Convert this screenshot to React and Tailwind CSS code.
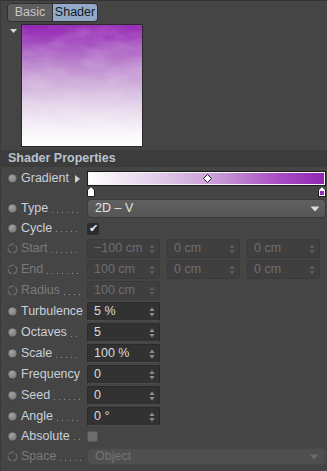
/* =========================================
   SMALL ICONS
========================================= */
const Dot = ({ disabled }) =>
  disabled ? (
    <svg width="11" height="11" viewBox="0 0 11 11" className="shrink-0">
      <circle cx="5.5" cy="5.5" r="4.3" fill="none" stroke="#6c6c6c" strokeWidth="1.3" strokeDasharray="6 1.6" />
    </svg>
  ) : (
    <svg width="11" height="11" viewBox="0 0 11 11" className="shrink-0">
      <defs>
        <radialGradient id="dotg" cx="40%" cy="35%" r="70%">
          <stop offset="0" stopColor="#a3a3a3" />
          <stop offset="1" stopColor="#747474" />
        </radialGradient>
      </defs>
      <circle cx="5.5" cy="5.5" r="4.6" fill="url(#dotg)" stroke="#3a3a3a" strokeWidth="0.8" />
    </svg>
  );

const Spinner = ({ disabled }) => (
  <svg width="6" height="10" viewBox="0 0 6 10" className="shrink-0">
    <path d="M3 0.5 L5.6 4 L0.4 4 Z M3 9.5 L5.6 6 L0.4 6 Z" fill={disabled ? "#5c5c5c" : "#8e8e8e"} />
  </svg>
);

const DownArrow = ({ color }) => (
  <svg width="10" height="6" viewBox="0 0 10 6">
    <path d="M0.5 0.5 L9.5 0.5 L5 5.5 Z" fill={color} />
  </svg>
);

/* =========================================
   LABEL COLUMN
========================================= */
const Label = ({ text, disabled, leader = true, extra = null }) => (
  <div className="w-[86px] shrink-0 flex items-center pl-[6px] pr-[6px] h-full">
    <Dot disabled={disabled} />
    <span
      className={`ml-[3px] text-[12.5px] leading-none whitespace-nowrap ${
        disabled ? "text-[#7a7a7a]" : "text-[#c9d0d9]"
      }`}
    >
      {text}
    </span>
    {leader ? (
      <span className="flex-1 self-end mb-[6px] ml-[4px] h-px bg-[repeating-linear-gradient(to_right,#909090_0_1px,transparent_1px_5px)]" />
    ) : (
      <span className="flex-1" />
    )}
    {extra}
  </div>
);

const Field = ({ value, disabled }) => (
  <div
    className={`w-[73px] h-[19px] flex items-center justify-between pl-[6px] pr-[4px] rounded-[2px] border ${
      disabled
        ? "bg-[#3f3f3f] border-[#3a3a3a] text-[#6e6e6e]"
        : "bg-[#323232] border-[#2a2a2a] border-b-[#4c4c4c] text-[#dcdcdc]"
    }`}
  >
    <span className="text-[12.5px] leading-none">{value}</span>
    <Spinner disabled={disabled} />
  </div>
);

const Row = ({ h = "h-[21px]", children }) => (
  <div className={`flex items-center ${h}`}>{children}</div>
);

/* =========================================
   MAIN PANEL
========================================= */
export default function App() {
  return (
    <div
      className="w-[327px] h-[471px] bg-[#454545] overflow-hidden border-t border-t-[#333] border-l border-l-[#3a3a3a]"
      style={{ fontFamily: '"Liberation Sans", Arial, sans-serif' }}
    >
      {/* ================= TABS ================= */}
      <div className="pt-[2px] pl-[6px] flex">
        <div className="flex h-[19px] rounded-[4px] border border-[#303030] overflow-hidden text-[12.5px]">
          <div className="w-[44px] flex items-center justify-center bg-[#5d5d5d] text-[#c6c6c6]">Basic</div>
          <div className="w-[45px] flex items-center justify-center bg-[#93a9c9] text-[#161a22] border-l border-[#303030]">Shader</div>
        </div>
      </div>

      {/* ================= PREVIEW ================= */}
      <div className="flex mt-[2px]">
        <div className="w-[20px] pl-[9px] pt-[5px]">
          <svg width="7" height="4" viewBox="0 0 7 4" className="block">
            <path d="M0 0 L7 0 L3.5 4 Z" fill="#d8d8d8" />
          </svg>
        </div>
        <div className="w-[122px] h-[123px] border border-[#2a2a2a] bg-white">
          <svg width="120" height="121" viewBox="0 0 120 121" className="block">
            <defs>
              <linearGradient id="pv" x1="0" y1="0" x2="0" y2="1">
                <stop offset="0" stopColor="#9526b5" />
                <stop offset="0.12" stopColor="#a044bd" />
                <stop offset="0.3" stopColor="#b980cb" />
                <stop offset="0.5" stopColor="#d1b1dc" />
                <stop offset="0.7" stopColor="#e8daed" />
                <stop offset="0.88" stopColor="#f8f4f9" />
                <stop offset="1" stopColor="#ffffff" />
              </linearGradient>
              <filter id="cloud" x="0" y="0" width="100%" height="100%">
                <feTurbulence type="fractalNoise" baseFrequency="0.03 0.07" numOctaves="3" seed="4" />
                <feColorMatrix type="matrix" values="0 0 0 0 1  0 0 0 0 1  0 0 0 0 1  0 0 0 0.35 -0.12" />
              </filter>
            </defs>
            <rect width="120" height="121" fill="url(#pv)" />
            <rect width="120" height="121" filter="url(#cloud)" />
          </svg>
        </div>
      </div>

      {/* ================= HEADER ================= */}
      <div className="mt-[3px] h-[17px] bg-[#3c3c3c] flex items-center pl-[7px]">
        <span className="text-[12.5px] font-bold text-[#b9c3cf]">Shader Properties</span>
      </div>

      {/* ================= GRADIENT ================= */}
      <div className="flex mt-[4px] h-[27px]">
        <div className="h-[15px] flex">
          <Label
            text="Gradient"
            leader={false}
            extra={
              <svg width="5" height="8" viewBox="0 0 5 8" className="mr-[1px]">
                <path d="M0 0 L5 4 L0 8 Z" fill="#cfcfcf" />
              </svg>
            }
          />
        </div>
        <div className="flex-1 pr-[1px] flex flex-col">
          <div className="relative h-[15px] border border-[#1c1c1c]">
            <div className="h-full border border-[#f4f4f4] bg-[linear-gradient(to_right,#ffffff_0%,#e6d3ec_25%,#c89ad6_55%,#a84fc3_80%,#9226b4_100%)]" />
            <svg width="9" height="9" viewBox="0 0 9 9" className="absolute left-[115px] top-[2px]">
              <path d="M4.5 0.5 L8.5 4.5 L4.5 8.5 L0.5 4.5 Z" fill="#ffffff" stroke="#222" strokeWidth="1" />
            </svg>
          </div>
          <div className="flex justify-between">
            <svg width="8" height="11" viewBox="0 0 8 11">
              <path d="M4 0.5 L7.5 4 L7.5 10.5 L0.5 10.5 L0.5 4 Z" fill="#ffffff" stroke="#1c1c1c" strokeWidth="1" />
            </svg>
            <svg width="8" height="11" viewBox="0 0 8 11">
              <path d="M4 0.5 L7.5 4 L7.5 10.5 L0.5 10.5 L0.5 4 Z" fill="#ffffff" stroke="#1c1c1c" strokeWidth="1" />
              <rect x="2" y="5" width="4" height="4" fill="#9a2bb8" />
            </svg>
          </div>
        </div>
      </div>

      {/* ================= TYPE ================= */}
      <Row>
        <Label text="Type" />
        <div className="flex-1 mr-[1px] h-[19px] rounded-[4px] border border-[#3a3a3a] bg-[linear-gradient(#606060,#555555)] flex items-center justify-between pl-[7px] pr-[5px]">
          <span className="text-[12.5px] leading-none text-[#e2e2e2]">2D – V</span>
          <DownArrow color="#dcdcdc" />
        </div>
      </Row>

      {/* ================= CYCLE ================= */}
      <Row h="h-[19px]">
        <Label text="Cycle" />
        <div className="w-[12px] h-[12px] rounded-[2px] bg-[#2c2c2c] flex items-center justify-center text-[11px] leading-none text-[#eeeeee]">
          ✔
        </div>
      </Row>

      {/* ================= START / END / RADIUS ================= */}
      <Row>
        <Label text="Start" disabled />
        <div className="flex gap-[7px]">
          <Field value="−100 cm" disabled />
          <Field value="0 cm" disabled />
          <Field value="0 cm" disabled />
        </div>
      </Row>
      <Row>
        <Label text="End" disabled />
        <div className="flex gap-[7px]">
          <Field value="100 cm" disabled />
          <Field value="0 cm" disabled />
          <Field value="0 cm" disabled />
        </div>
      </Row>
      <Row>
        <Label text="Radius" disabled />
        <Field value="100 cm" disabled />
      </Row>

      {/* ================= NOISE PARAMS ================= */}
      <Row>
        <Label text="Turbulence" leader={false} />
        <Field value="5 %" />
      </Row>
      <Row>
        <Label text="Octaves" />
        <Field value="5" />
      </Row>
      <Row>
        <Label text="Scale" />
        <Field value="100 %" />
      </Row>
      <Row>
        <Label text="Frequency" leader={false} />
        <Field value="0" />
      </Row>
      <Row>
        <Label text="Seed" />
        <Field value="0" />
      </Row>
      <Row>
        <Label text="Angle" />
        <Field value="0 °" />
      </Row>

      {/* ================= ABSOLUTE ================= */}
      <Row h="h-[19px]">
        <Label text="Absolute" />
        <div className="w-[11px] h-[11px] rounded-[2px] bg-[#6e6e6e] border border-[#555]" />
      </Row>

      {/* ================= SPACE ================= */}
      <Row>
        <Label text="Space" disabled />
        <div className="flex-1 mr-[1px] h-[17px] rounded-[4px] bg-[#4f4f4f] border border-[#474747] flex items-center justify-between pl-[7px] pr-[6px]">
          <span className="text-[12.5px] leading-none text-[#737373]">Object</span>
          <DownArrow color="#6a6a6a" />
        </div>
      </Row>
    </div>
  );
}
